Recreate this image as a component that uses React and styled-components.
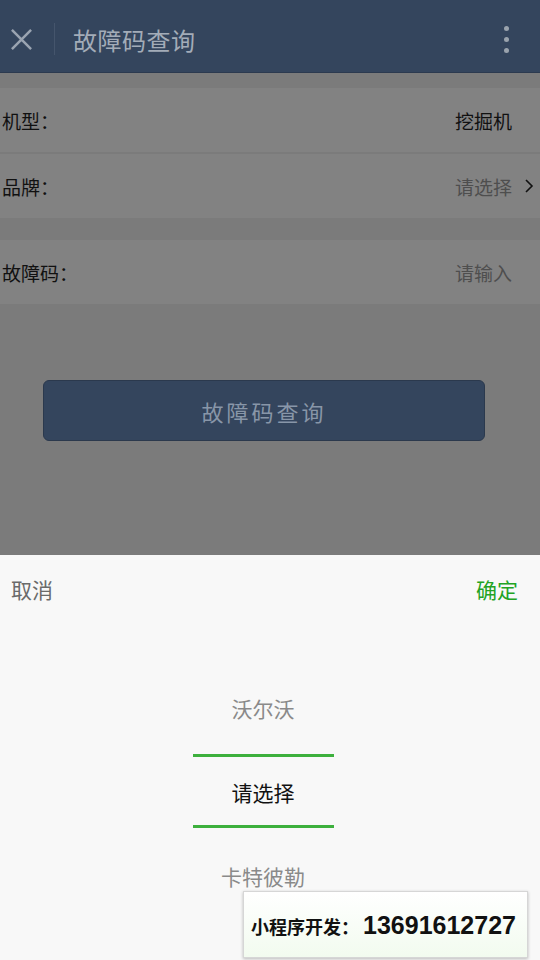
import React from "react";
import styled, { createGlobalStyle } from "styled-components";

const GlobalStyle = createGlobalStyle`
  html, body {
    margin: 0;
    padding: 0;
    background: #7b7b7b;
    font-family: "Noto Sans CJK SC", "Noto Sans", sans-serif;
  }
  * { box-sizing: border-box; }
`;

const brands = ["沃尔沃", "请选择", "卡特彼勒"];

const App = () => {
  return (
    <Page>
      <GlobalStyle />
      <NavBar>
        <CloseIcon viewBox="0 0 24 24">
          <path d="M2 2 L22 22 M22 2 L2 22" stroke="#9aa4b1" strokeWidth="2.6" fill="none" />
        </CloseIcon>
        <NavDivider />
        <NavTitle>故障码查询</NavTitle>
        <Dots>
          <Dot />
          <Dot />
          <Dot />
        </Dots>
      </NavBar>

      <Form>
        <Group>
          <Row>
            <Label>机型：</Label>
            <Value>挖掘机</Value>
          </Row>
          <Row>
            <Label>品牌：</Label>
            <Value muted>请选择</Value>
            <Chevron viewBox="0 0 10 16">
              <path d="M2 2 L8 8 L2 14" stroke="#111" strokeWidth="1.6" fill="none" />
            </Chevron>
          </Row>
        </Group>
        <Group>
          <Row>
            <Label>故障码：</Label>
            <Value muted>请输入</Value>
          </Row>
        </Group>
        <ButtonWrap>
          <QueryButton>故障码查询</QueryButton>
        </ButtonWrap>
      </Form>

      <Picker>
        <PickerBar>
          <BarButton>取消</BarButton>
          <BarButton confirm>确定</BarButton>
        </PickerBar>
        <Wheel>
          {brands.map((b, i) => (
            <WheelItem key={b} selected={i === 1}>
              {b}
            </WheelItem>
          ))}
          <Indicator />
        </Wheel>
      </Picker>

      <Watermark>
        <WmLabel>小程序开发：</WmLabel>
        <WmPhone>13691612727</WmPhone>
      </Watermark>
    </Page>
  );
};

export default App;

const Page = styled.div`
  width: 540px;
  height: 960px;
  display: flex;
  flex-direction: column;
  background: #7b7b7b;
  overflow: hidden;
  position: relative;
`;

const NavBar = styled.div`
  height: 73px;
  flex-shrink: 0;
  background: #34455d;
  display: flex;
  align-items: center;
  padding: 6px 0 0 10px;
  border-bottom: 1px solid #2c3a4f;
`;

const CloseIcon = styled.svg`
  width: 23px;
  height: 23px;
`;

const NavDivider = styled.div`
  width: 1px;
  height: 32px;
  background: #45556c;
  margin: 0 18px 0 21px;
`;

const NavTitle = styled.div`
  flex: 1;
  font-size: 24px;
  color: #a3acb8;
  letter-spacing: 0.5px;
`;

const Dots = styled.div`
  width: 66px;
  display: flex;
  flex-direction: column;
  align-items: center;
  gap: 6px;
  padding-right: 2px;
`;

const Dot = styled.span`
  width: 5px;
  height: 5px;
  border-radius: 50%;
  background: #9aa3ad;
`;

const Form = styled.div`
  flex: 1;
  padding-top: 15px;
  display: flex;
  flex-direction: column;
`;

const Group = styled.div`
  display: flex;
  flex-direction: column;
  gap: 2px;
  margin-bottom: 22px;
  margin-left: -6px;
`;

const Row = styled.div`
  height: 64px;
  background: #828282;
  display: flex;
  align-items: center;
  padding: 0 28px 0 8px;
  position: relative;
`;

const Label = styled.div`
  flex: 1;
  font-size: 19px;
  color: #111;
`;

const Value = styled.div`
  font-size: 19px;
  color: ${(p) => (p.muted ? "#4e4e4e" : "#111")};
`;

const Chevron = styled.svg`
  position: absolute;
  right: 6px;
  width: 10px;
  height: 16px;
`;

const ButtonWrap = styled.div`
  padding: 54px 55px 0 43px;
`;

const QueryButton = styled.div`
  height: 61px;
  border-radius: 6px;
  background: #34455d;
  border: 1px solid #2b394d;
  display: flex;
  align-items: center;
  justify-content: center;
  font-size: 22px;
  letter-spacing: 3px;
  color: #8896a8;
`;

const Picker = styled.div`
  height: 405px;
  flex-shrink: 0;
  background: #f8f8f8;
  display: flex;
  flex-direction: column;
`;

const PickerBar = styled.div`
  height: 68px;
  display: flex;
  align-items: center;
  justify-content: space-between;
  padding: 0 22px 0 11px;
`;

const BarButton = styled.div`
  font-size: 21px;
  color: ${(p) => (p.confirm ? "#22a323" : "#6a6a6a")};
`;

const Wheel = styled.div`
  flex: 1;
  display: flex;
  flex-direction: column;
  align-items: center;
  padding: 43px 14px 0 0;
  position: relative;
`;

const WheelItem = styled.div`
  height: 84px;
  line-height: 84px;
  font-size: 21px;
  color: ${(p) => (p.selected ? "#111" : "#8a8a8a")};
  flex-shrink: 0;
`;

const Indicator = styled.div`
  position: absolute;
  top: 131px;
  left: 193px;
  width: 141px;
  height: 74px;
  border-top: 3px solid #3db03d;
  border-bottom: 3px solid #3db03d;
`;

const Watermark = styled.div`
  position: absolute;
  left: 243px;
  top: 891px;
  width: 285px;
  height: 67px;
  border: 1px solid #d6d6d6;
  background: linear-gradient(#ffffff, #f2fbef);
  box-shadow: 0 1px 3px rgba(0, 0, 0, 0.25);
  display: flex;
  align-items: center;
  justify-content: center;
  padding: 2px 4px 0 0;
`;

const WmLabel = styled.span`
  font-size: 18px;
  font-weight: bold;
  color: #111;
`;

const WmPhone = styled.span`
  font-family: "Liberation Sans", Arial, sans-serif;
  font-size: 25px;
  font-weight: bold;
  color: #111;
  margin-left: 4px;
`;
